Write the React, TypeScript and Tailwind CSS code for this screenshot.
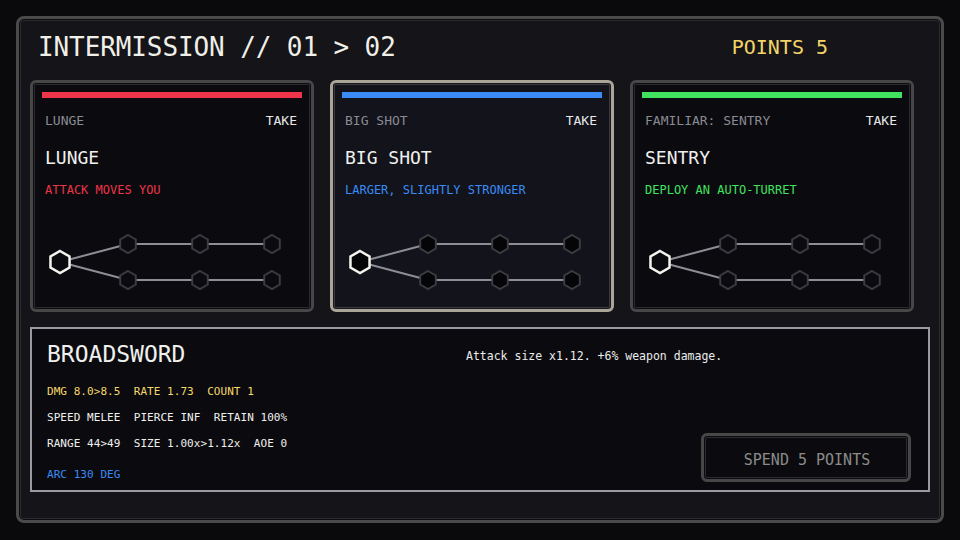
import React from 'react';

const mono = { fontFamily: '"DejaVu Sans Mono", "Liberation Mono", monospace' };

interface Perk {
  label: string;
  title: string;
  desc: string;
  bar: string;
  text: string;
  selected?: boolean;
}

const perks: Perk[] = [
  { label: 'LUNGE', title: 'LUNGE', desc: 'ATTACK MOVES YOU', bar: 'bg-[#ee3449]', text: 'text-[#ee3449]' },
  {
    label: 'BIG SHOT',
    title: 'BIG SHOT',
    desc: 'LARGER, SLIGHTLY STRONGER',
    bar: 'bg-[#3a8bf5]',
    text: 'text-[#3a8bf5]',
    selected: true,
  },
  {
    label: 'FAMILIAR: SENTRY',
    title: 'SENTRY',
    desc: 'DEPLOY AN AUTO-TURRET',
    bar: 'bg-[#41e25f]',
    text: 'text-[#41e25f]',
  },
];

// pointy-top hexagon
function hex(cx: number, cy: number, r: number) {
  return Array.from({ length: 6 }, (_, i) => {
    const a = (Math.PI / 180) * (60 * i - 90);
    return `${(cx + r * Math.cos(a)).toFixed(2)},${(cy + r * Math.sin(a)).toFixed(2)}`;
  }).join(' ');
}

function UpgradeTree({ fill }: { fill: string }) {
  const xs = [86, 158, 230];
  const ys = [14, 50];
  return (
    <svg width="260" height="64" viewBox="0 0 260 64" className="block">
      {ys.map((y) => (
        <g key={y}>
          <line x1={18} y1={32} x2={xs[0]} y2={y} stroke="#8d8d96" strokeWidth="2" />
          <line x1={xs[0]} y1={y} x2={xs[2]} y2={y} stroke="#8d8d96" strokeWidth="2" />
        </g>
      ))}
      {ys.map((y) =>
        xs.map((x) => (
          <polygon key={`${x}-${y}`} points={hex(x, y, 9)} fill={fill} stroke="#3b3b42" strokeWidth="2" />
        )),
      )}
      <polygon points={hex(18, 32, 11)} fill={fill} stroke="#f4f3ee" strokeWidth="2.5" />
    </svg>
  );
}

function PerkCard({ perk }: { perk: Perk }) {
  const frame = perk.selected
    ? 'border-[#aaa597] bg-[#12131b] shadow-[inset_0_0_0_1px_#17181f,inset_0_0_0_2px_#3a3a3e]'
    : 'border-[#474747] bg-[#0b0b0f] shadow-[inset_0_0_0_1px_#0b0b0f,inset_0_0_0_2px_#2c2c30]';
  return (
    <div className={`w-[284px] h-[232px] border-[3px] rounded-[6px] p-[9px] flex flex-col ${frame}`}>
      <div className={`h-[6px] ${perk.bar}`} />
      <div className="mt-[15px] pl-[3px] pr-[5px] flex justify-between text-[13px] leading-[16px]">
        <span className="text-[#8a8a93]">{perk.label}</span>
        <span className="text-[#e8e8e8]">TAKE</span>
      </div>
      <div className="mt-[17px] pl-[3px] text-[18px] leading-[24px] text-[#f0f0ee]">{perk.title}</div>
      <div className={`mt-[13px] pl-[3px] text-[12px] leading-[14px] ${perk.text}`}>{perk.desc}</div>
      <div className="mt-[33px]">
        <UpgradeTree fill={perk.selected ? '#050507' : '#0b0b0f'} />
      </div>
    </div>
  );
}

export default function App() {
  return (
    <div className="w-[960px] h-[540px] bg-[#0a0a0d] pt-[16px] pl-[16px]" style={mono}>
      <div className="w-[928px] h-[507px] border-[3px] border-[#4a4a4a] rounded-[8px] bg-[#141419] shadow-[inset_0_0_0_1px_#0c0c0f,inset_0_0_0_2px_#2b2b2f] pt-[12px] px-[11px]">
        <div className="flex items-center justify-between pl-[8px] pr-[102px] h-[32px]">
          <span className="text-[26px] tracking-[-0.1px] text-[#f0efe8]">INTERMISSION // 01 &gt; 02</span>
          <span className="text-[20px] text-[#f3d467]">POINTS 5</span>
        </div>

        <div className="mt-[17px] flex gap-[16px]">
          {perks.map((p) => (
            <PerkCard key={p.title} perk={p} />
          ))}
        </div>

        <div className="mt-[15px] h-[165px] w-[900px] border-2 border-[#9b9ca3] bg-[#0b0b0f] flex">
          <div className="w-[434px] pl-[15px] pt-[12px]">
            <div className="text-[23px] leading-[26px] text-[#f0f0ee]">BROADSWORD</div>
            <div className="text-[11px] leading-[16px] tracking-[0.05px] whitespace-pre">
              <div className="mt-[17px] text-[#f5d86a]">DMG 8.0&gt;8.5  RATE 1.73  COUNT 1</div>
              <div className="mt-[10px] text-[#f0f0ee]">SPEED MELEE  PIERCE INF  RETAIN 100%</div>
              <div className="mt-[10px] text-[#f0f0ee]">RANGE 44&gt;49  SIZE 1.00x&gt;1.12x  AOE 0</div>
              <div className="mt-[15px] text-[#3a8bf5]">ARC 130 DEG</div>
            </div>
          </div>
          <div className="flex-1 flex flex-col justify-between pt-[19px] pb-[8px] pr-[17px]">
            <div className="text-[11.5px] leading-[16px] text-[#ececec]">Attack size x1.12. +6% weapon damage.</div>
            <div className="self-end w-[210px] h-[49px] border-[3px] border-[#474747] rounded-[6px] shadow-[inset_0_0_0_1px_#0b0b0f,inset_0_0_0_2px_#2c2c30] flex items-center justify-center pt-[5px]">
              <span className="text-[15px] text-[#8b8b8b] pl-[2px]">SPEND 5 POINTS</span>
            </div>
          </div>
        </div>
      </div>
    </div>
  );
}
